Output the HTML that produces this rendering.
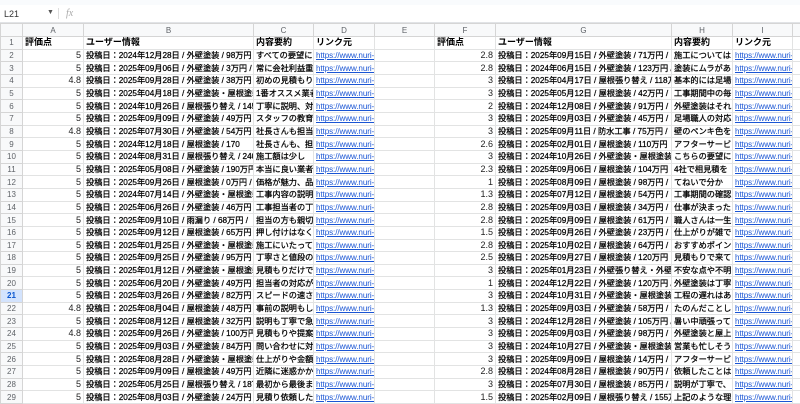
<!DOCTYPE html>
<html><head><meta charset="utf-8"><style>
body{margin:0;width:800px;height:400px;overflow:hidden;background:#fff;font-family:"Liberation Sans","Noto Sans CJK JP",sans-serif;}
.top{position:absolute;left:0;top:0;width:800px;height:5px;background:#f9fbfd;}
.fb{position:absolute;left:0;top:5px;width:800px;height:17px;background:#fff;border-bottom:1px solid #e1e3e6;font-size:9px;color:#333;}
.fb .ref{position:absolute;left:4px;top:4px;}
.fb .dd{position:absolute;left:47px;top:4px;font-size:7px;color:#555;}
.fb .sep{position:absolute;left:58px;top:3px;width:1px;height:11px;background:#ddd;}
.fb .fx{position:absolute;left:66px;top:3px;font-style:italic;color:#aaa;font-family:"Liberation Serif",serif;font-size:10px;}
table{position:absolute;left:0;top:23px;border-collapse:collapse;table-layout:fixed;width:805px;}
td{height:11.67px;padding:0 2px;border:1px solid #e2e3e3;font-size:8.2px;line-height:11px;white-space:nowrap;overflow:hidden;color:#000;font-weight:normal;-webkit-text-stroke:0.25px #000;}
tr.h td{background:#f8f9fa;color:#5f6368;text-align:center;font-size:8px;height:12px;border-color:#d5d5d5;-webkit-text-stroke:0;}
tr.b td{font-weight:bold;font-size:9px;-webkit-text-stroke:0;}
td.n{background:#f8f9fa;color:#5f6368;font-weight:normal;text-align:center;font-size:8px;border-color:#d5d5d5;-webkit-text-stroke:0;}
tr.b td.n{font-weight:normal;font-size:8px;}
td.n.sel{background:#d3e3fd;color:#0b57d0;font-weight:bold;}
td.r{text-align:right;-webkit-text-stroke:0;color:#222;font-size:9px;}
td.l{color:#1a55d4;text-decoration:underline;-webkit-text-stroke:0;font-size:8.1px;letter-spacing:-0.1px;}
</style></head><body>
<div class="top"></div>
<div class="fb"><span class="ref">L21</span><span class="dd">▼</span><span class="sep"></span><span class="fx">fx</span></div>
<table>
<colgroup><col style="width:22px"><col style="width:61px"><col style="width:170px"><col style="width:60px"><col style="width:61px"><col style="width:60px"><col style="width:61px"><col style="width:176px"><col style="width:61px"><col style="width:60px"><col style="width:13px"></colgroup>
<tr class="h"><td></td><td>A</td><td>B</td><td>C</td><td>D</td><td>E</td><td>F</td><td>G</td><td>H</td><td>I</td><td></td></tr>
<tr class="b"><td class="n">1</td><td>評価点</td><td>ユーザー情報</td><td>内容要約</td><td>リンク元</td><td></td><td>評価点</td><td>ユーザー情報</td><td>内容要約</td><td>リンク元</td><td></td></tr>
<tr><td class="n">2</td><td class="r">5</td><td>投稿日：2024年12月28日 / 外壁塗装 / 98万円 /</td><td>すべての要望に</td><td class="l">https://www.nuri-</td><td></td><td class="r">2.8</td><td>投稿日：2025年09月15日 / 外壁塗装 / 71万円 /</td><td>施工については</td><td class="l">https://www.nuri-</td><td></td></tr>
<tr><td class="n">3</td><td class="r">5</td><td>投稿日：2025年09月06日 / 外壁塗装 / 3万円 /</td><td>常に会社利益重視</td><td class="l">https://www.nuri-</td><td></td><td class="r">2.8</td><td>投稿日：2024年06月15日 / 外壁塗装 / 123万円 /</td><td>塗装にムラがあ</td><td class="l">https://www.nuri-</td><td></td></tr>
<tr><td class="n">4</td><td class="r">4.8</td><td>投稿日：2025年09月28日 / 外壁塗装 / 38万円 /</td><td>初めの見積もり</td><td class="l">https://www.nuri-</td><td></td><td class="r">3</td><td>投稿日：2025年04月17日 / 屋根張り替え / 118万</td><td>基本的には足場</td><td class="l">https://www.nuri-</td><td></td></tr>
<tr><td class="n">5</td><td class="r">5</td><td>投稿日：2025年04月18日 / 外壁塗装・屋根塗装</td><td>1番オススメ業者</td><td class="l">https://www.nuri-</td><td></td><td class="r">3</td><td>投稿日：2025年05月12日 / 屋根塗装 / 42万円 /</td><td>工事期間中の毎</td><td class="l">https://www.nuri-</td><td></td></tr>
<tr><td class="n">6</td><td class="r">5</td><td>投稿日：2024年10月26日 / 屋根張り替え / 145</td><td>丁寧に説明、対応</td><td class="l">https://www.nuri-</td><td></td><td class="r">2</td><td>投稿日：2024年12月08日 / 外壁塗装 / 91万円 /</td><td>外壁塗装はそれ</td><td class="l">https://www.nuri-</td><td></td></tr>
<tr><td class="n">7</td><td class="r">5</td><td>投稿日：2025年09月09日 / 外壁塗装 / 49万円 /</td><td>スタッフの教育</td><td class="l">https://www.nuri-</td><td></td><td class="r">3</td><td>投稿日：2025年09月03日 / 外壁塗装 / 45万円 /</td><td>足場職人の対応</td><td class="l">https://www.nuri-</td><td></td></tr>
<tr><td class="n">8</td><td class="r">4.8</td><td>投稿日：2025年07月30日 / 外壁塗装 / 54万円 /</td><td>社長さんも担当</td><td class="l">https://www.nuri-</td><td></td><td class="r">3</td><td>投稿日：2025年09月11日 / 防水工事 / 75万円 /</td><td>壁のペンキ色を</td><td class="l">https://www.nuri-</td><td></td></tr>
<tr><td class="n">9</td><td class="r">5</td><td>投稿日：2024年12月18日 / 屋根塗装 / 170</td><td>社長さんも、担当</td><td class="l">https://www.nuri-</td><td></td><td class="r">2.6</td><td>投稿日：2025年02月01日 / 屋根塗装 / 110万円</td><td>アフターサービ</td><td class="l">https://www.nuri-</td><td></td></tr>
<tr><td class="n">10</td><td class="r">5</td><td>投稿日：2024年08月31日 / 屋根張り替え / 240</td><td>施工額は少し</td><td class="l">https://www.nuri-</td><td></td><td class="r">3</td><td>投稿日：2024年10月26日 / 外壁塗装・屋根塗装</td><td>こちらの要望に</td><td class="l">https://www.nuri-</td><td></td></tr>
<tr><td class="n">11</td><td class="r">5</td><td>投稿日：2025年05月08日 / 外壁塗装 / 190万円 /</td><td>本当に良い業者</td><td class="l">https://www.nuri-</td><td></td><td class="r">2.3</td><td>投稿日：2025年09月06日 / 屋根塗装 / 104万円</td><td>4社で相見積を</td><td class="l">https://www.nuri-</td><td></td></tr>
<tr><td class="n">12</td><td class="r">5</td><td>投稿日：2025年09月26日 / 屋根塗装 / 0万円 /</td><td>価格が魅力、品</td><td class="l">https://www.nuri-</td><td></td><td class="r">1</td><td>投稿日：2025年08月09日 / 屋根塗装 / 98万円 /</td><td>てねいで分か</td><td class="l">https://www.nuri-</td><td></td></tr>
<tr><td class="n">13</td><td class="r">5</td><td>投稿日：2024年07月14日 / 外壁塗装・屋根塗装</td><td>工事内容の説明</td><td class="l">https://www.nuri-</td><td></td><td class="r">1.3</td><td>投稿日：2025年07月12日 / 屋根塗装 / 54万円 /</td><td>工事期間の確認</td><td class="l">https://www.nuri-</td><td></td></tr>
<tr><td class="n">14</td><td class="r">5</td><td>投稿日：2025年06月26日 / 外壁塗装 / 46万円 /</td><td>工事担当者の丁寧</td><td class="l">https://www.nuri-</td><td></td><td class="r">2.8</td><td>投稿日：2025年09月03日 / 屋根塗装 / 34万円 /</td><td>仕事が決まった</td><td class="l">https://www.nuri-</td><td></td></tr>
<tr><td class="n">15</td><td class="r">5</td><td>投稿日：2025年09月10日 / 雨漏り / 68万円 /</td><td>担当の方も親切</td><td class="l">https://www.nuri-</td><td></td><td class="r">2.8</td><td>投稿日：2025年09月09日 / 屋根塗装 / 61万円 /</td><td>職人さんは一生</td><td class="l">https://www.nuri-</td><td></td></tr>
<tr><td class="n">16</td><td class="r">5</td><td>投稿日：2025年09月12日 / 屋根塗装 / 65万円 /</td><td>押し付けはなく</td><td class="l">https://www.nuri-</td><td></td><td class="r">1.5</td><td>投稿日：2025年09月26日 / 外壁塗装 / 23万円 /</td><td>仕上がりが雑で</td><td class="l">https://www.nuri-</td><td></td></tr>
<tr><td class="n">17</td><td class="r">5</td><td>投稿日：2025年01月25日 / 外壁塗装・屋根塗装</td><td>施工にいたって</td><td class="l">https://www.nuri-</td><td></td><td class="r">2.8</td><td>投稿日：2025年10月02日 / 屋根塗装 / 64万円 /</td><td>おすすめポイン</td><td class="l">https://www.nuri-</td><td></td></tr>
<tr><td class="n">18</td><td class="r">5</td><td>投稿日：2025年09月25日 / 外壁塗装 / 95万円 /</td><td>丁寧さと値段の</td><td class="l">https://www.nuri-</td><td></td><td class="r">2.5</td><td>投稿日：2025年09月27日 / 屋根塗装 / 120万円</td><td>見積もりで来て</td><td class="l">https://www.nuri-</td><td></td></tr>
<tr><td class="n">19</td><td class="r">5</td><td>投稿日：2025年01月12日 / 外壁塗装・屋根塗装</td><td>見積もりだけで</td><td class="l">https://www.nuri-</td><td></td><td class="r">3</td><td>投稿日：2025年01月23日 / 外壁張り替え・外壁</td><td>不安な点や不明</td><td class="l">https://www.nuri-</td><td></td></tr>
<tr><td class="n">20</td><td class="r">5</td><td>投稿日：2025年06月20日 / 外壁塗装 / 49万円 /</td><td>担当者の対応が</td><td class="l">https://www.nuri-</td><td></td><td class="r">1</td><td>投稿日：2024年12月22日 / 外壁塗装 / 120万円 /</td><td>外壁塗装は丁寧</td><td class="l">https://www.nuri-</td><td></td></tr>
<tr><td class="n sel">21</td><td class="r">5</td><td>投稿日：2025年03月26日 / 外壁塗装 / 82万円 /</td><td>スピードの速さ、</td><td class="l">https://www.nuri-</td><td></td><td class="r">3</td><td>投稿日：2024年10月31日 / 外壁塗装・屋根塗装</td><td>工程の遅れはあ</td><td class="l">https://www.nuri-</td><td></td></tr>
<tr><td class="n">22</td><td class="r">4.8</td><td>投稿日：2025年08月04日 / 屋根塗装 / 48万円 /</td><td>事前の説明もし</td><td class="l">https://www.nuri-</td><td></td><td class="r">1.3</td><td>投稿日：2025年09月03日 / 外壁塗装 / 58万円 /</td><td>たのんだことし</td><td class="l">https://www.nuri-</td><td></td></tr>
<tr><td class="n">23</td><td class="r">5</td><td>投稿日：2025年08月12日 / 屋根塗装 / 32万円 /</td><td>説明も丁寧で急</td><td class="l">https://www.nuri-</td><td></td><td class="r">3</td><td>投稿日：2024年12月28日 / 外壁塗装 / 105万円 /</td><td>暑い中頑張って</td><td class="l">https://www.nuri-</td><td></td></tr>
<tr><td class="n">24</td><td class="r">4.8</td><td>投稿日：2025年09月26日 / 外壁塗装 / 100万円</td><td>見積もりや提案</td><td class="l">https://www.nuri-</td><td></td><td class="r">3</td><td>投稿日：2025年09月03日 / 外壁塗装 / 98万円 /</td><td>外壁塗装と屋上</td><td class="l">https://www.nuri-</td><td></td></tr>
<tr><td class="n">25</td><td class="r">5</td><td>投稿日：2025年09月03日 / 外壁塗装 / 84万円 /</td><td>問い合わせに対</td><td class="l">https://www.nuri-</td><td></td><td class="r">3</td><td>投稿日：2024年10月27日 / 外壁塗装・屋根塗装</td><td>営業も忙しそう</td><td class="l">https://www.nuri-</td><td></td></tr>
<tr><td class="n">26</td><td class="r">5</td><td>投稿日：2025年08月28日 / 外壁塗装・屋根塗装</td><td>仕上がりや金額</td><td class="l">https://www.nuri-</td><td></td><td class="r">3</td><td>投稿日：2025年09月09日 / 屋根塗装 / 14万円 /</td><td>アフターサービ</td><td class="l">https://www.nuri-</td><td></td></tr>
<tr><td class="n">27</td><td class="r">5</td><td>投稿日：2025年09月09日 / 屋根塗装 / 49万円 /</td><td>近隣に迷惑かか</td><td class="l">https://www.nuri-</td><td></td><td class="r">2.8</td><td>投稿日：2024年08月28日 / 屋根塗装 / 90万円 /</td><td>依頼したことは</td><td class="l">https://www.nuri-</td><td></td></tr>
<tr><td class="n">28</td><td class="r">5</td><td>投稿日：2025年05月25日 / 屋根張り替え / 187</td><td>最初から最後ま</td><td class="l">https://www.nuri-</td><td></td><td class="r">3</td><td>投稿日：2025年07月30日 / 屋根塗装 / 85万円 /</td><td>説明が丁寧で、</td><td class="l">https://www.nuri-</td><td></td></tr>
<tr><td class="n">29</td><td class="r">5</td><td>投稿日：2025年08月03日 / 外壁塗装 / 24万円 /</td><td>見積り依頼した</td><td class="l">https://www.nuri-</td><td></td><td class="r">1.5</td><td>投稿日：2025年02月09日 / 屋根張り替え / 155万</td><td>上記のような理</td><td class="l">https://www.nuri-</td><td></td></tr>
</table>
</body></html>
